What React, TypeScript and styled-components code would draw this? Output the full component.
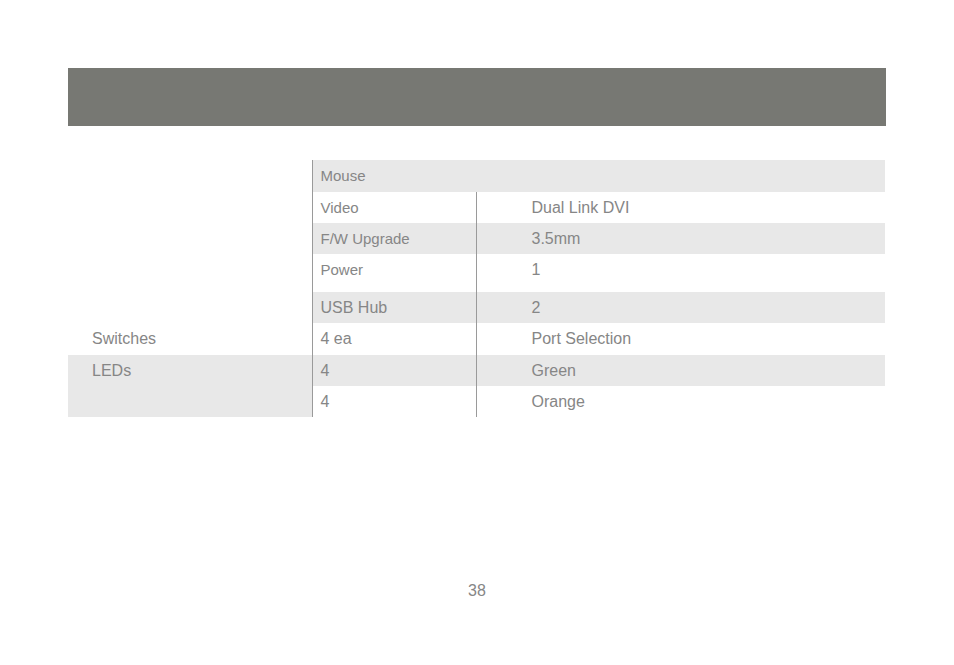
import React from 'react'
import styled, { createGlobalStyle } from 'styled-components'

const GlobalStyle = createGlobalStyle`
  body {
    margin: 0;
    background: #ffffff;
    font-family: 'Liberation Sans', Arial, sans-serif;
  }
`

type Row = {
  left?: string
  leftSpan?: number
  leftShaded?: boolean
  mid: string
  right?: string
  small?: boolean
  shaded?: boolean
  height: number
  wide?: boolean
}

const rows: Row[] = [
  { left: '', leftSpan: 5, mid: 'Mouse', small: true, shaded: true, wide: true, height: 32 },
  { mid: 'Video', right: 'Dual Link DVI', small: true, height: 31 },
  { mid: 'F/W Upgrade', right: '3.5mm', small: true, shaded: true, height: 31 },
  { mid: 'Power', right: '1', small: true, height: 38 },
  { mid: 'USB Hub', right: '2', shaded: true, height: 31 },
  { left: 'Switches', mid: '4 ea', right: 'Port Selection', height: 32 },
  { left: 'LEDs', leftSpan: 2, leftShaded: true, mid: '4', right: 'Green', shaded: true, height: 31 },
  { mid: '4', right: 'Orange', height: 31 },
]

export default function App(): JSX.Element {
  return (
    <Page>
      <GlobalStyle />
      <TitleBar />
      <SpecTable>
        <colgroup>
          <col style={{ width: 244 }} />
          <col style={{ width: 164 }} />
          <col style={{ width: 409 }} />
        </colgroup>
        <tbody>
          {rows.map((row, i) => (
            <TableRow key={i} h={row.height}>
              {row.left !== undefined && (
                <LabelCell rowSpan={row.leftSpan || 1} shaded={!!row.leftShaded}>
                  {row.left}
                </LabelCell>
              )}
              {row.wide ? (
                <ValueCell colSpan={2} shaded={!!row.shaded} small={!!row.small}>
                  {row.mid}
                </ValueCell>
              ) : (
                <>
                  <ValueCell shaded={!!row.shaded} small={!!row.small} divided>
                    {row.mid}
                  </ValueCell>
                  <DetailCell shaded={!!row.shaded}>{row.right}</DetailCell>
                </>
              )}
            </TableRow>
          ))}
        </tbody>
      </SpecTable>
      <PageNumber>38</PageNumber>
    </Page>
  )
}

const Page = styled.div`
  width: 954px;
  height: 665px;
  padding: 68px 0 0 68px;
  box-sizing: border-box;
  position: relative;
`

const TitleBar = styled.div`
  width: 818px;
  height: 58px;
  background: #777873;
`

const SpecTable = styled.table`
  margin-top: 34px;
  border-collapse: collapse;
  table-layout: fixed;
  width: 817px;
  color: #868686;
`

const TableRow = styled.tr<{ h: number }>`
  height: ${(p) => p.h}px;
`

const LabelCell = styled.td<{ shaded: boolean }>`
  padding: 0 0 0 24px;
  vertical-align: top;
  line-height: 31px;
  font-size: 16px;
  background: ${(p) => (p.shaded ? '#e8e8e8' : 'transparent')};
  border-right: 1px solid #9a9a9a;
`

const ValueCell = styled.td<{ shaded: boolean; small: boolean; divided?: boolean }>`
  padding: 0 0 0 8px;
  vertical-align: top;
  line-height: 31px;
  font-size: ${(p) => (p.small ? 15 : 16)}px;
  background: ${(p) => (p.shaded ? '#e8e8e8' : 'transparent')};
  border-right: ${(p) => (p.divided ? '1px solid #9a9a9a' : 'none')};
  white-space: nowrap;
`

const DetailCell = styled.td<{ shaded: boolean }>`
  padding: 0 0 0 55px;
  vertical-align: top;
  line-height: 31px;
  font-size: 16px;
  background: ${(p) => (p.shaded ? '#e8e8e8' : 'transparent')};
`

const PageNumber = styled.div`
  position: absolute;
  left: 0;
  right: 0;
  top: 582px;
  text-align: center;
  font-size: 16px;
  color: #868686;
`
